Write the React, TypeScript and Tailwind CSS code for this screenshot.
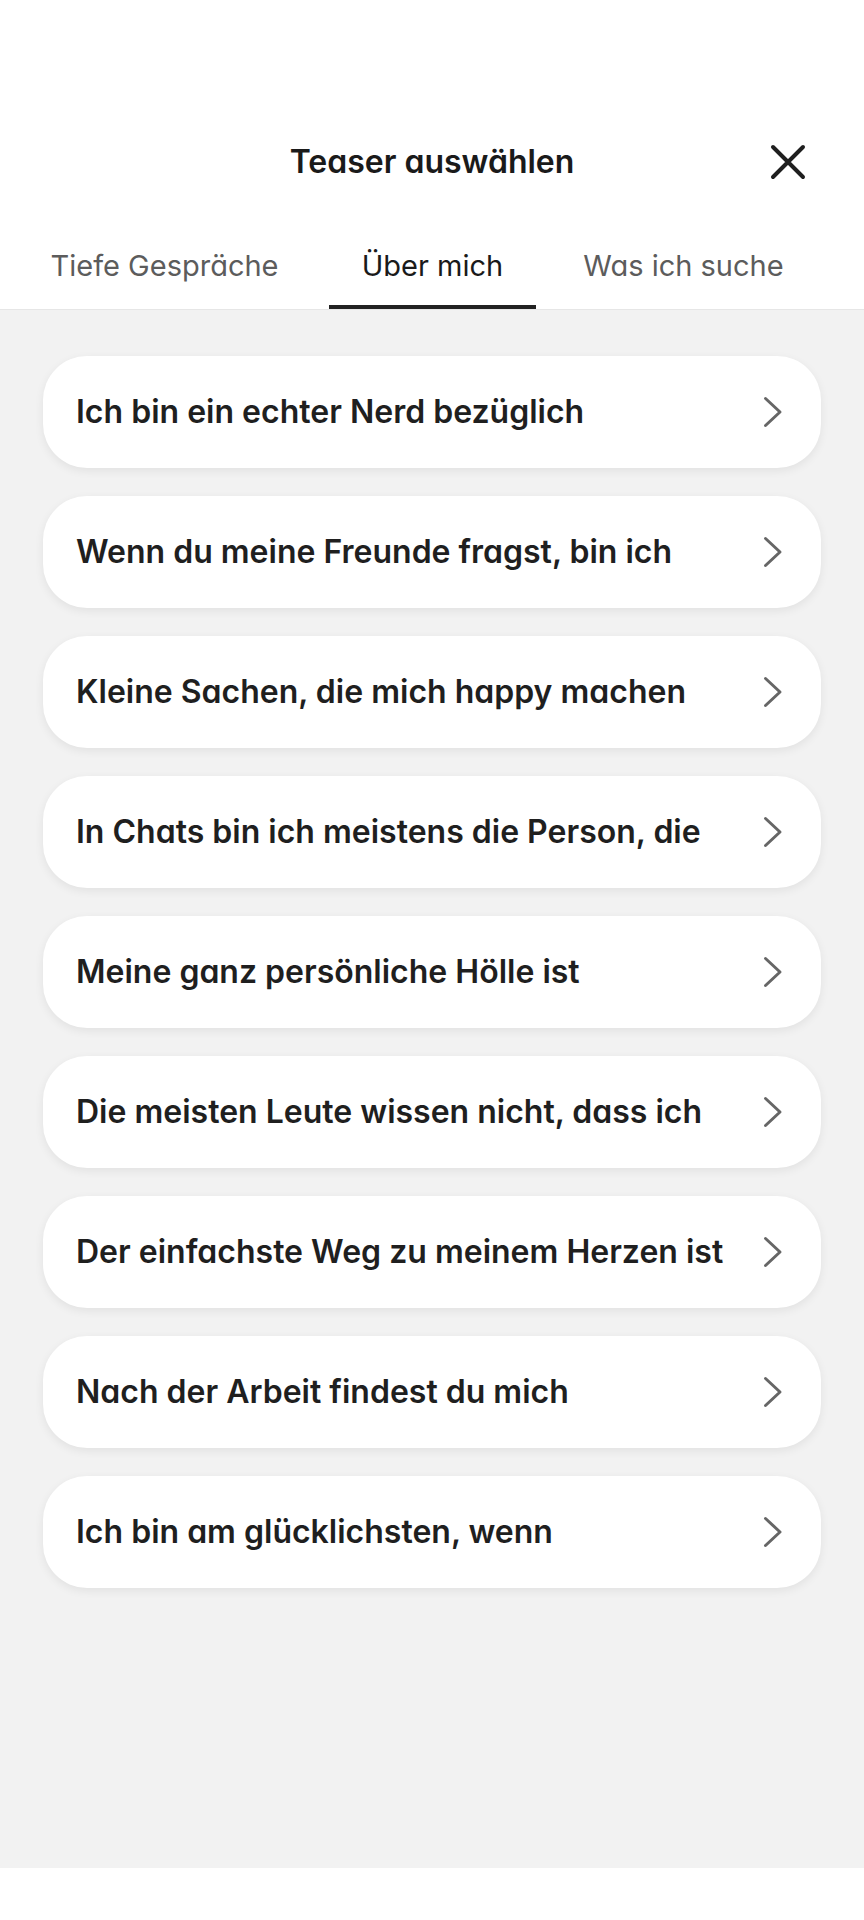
import React from 'react';

const teasers = [
  'Ich bin ein echter Nerd bezüglich',
  'Wenn du meine Freunde fragst, bin ich',
  'Kleine Sachen, die mich happy machen',
  'In Chats bin ich meistens die Person, die',
  'Meine ganz persönliche Hölle ist',
  'Die meisten Leute wissen nicht, dass ich',
  'Der einfachste Weg zu meinem Herzen ist',
  'Nach der Arbeit findest du mich',
  'Ich bin am glücklichsten, wenn',
];

const tabs = [
  { id: 'deep', label: 'Tiefe Gespräche', width: 'w-[329px]' },
  { id: 'me', label: 'Über mich', width: 'w-[207px]' },
  { id: 'search', label: 'Was ich suche', width: 'w-[295px]' },
];

const Chevron: React.FC = () => (
  <svg width="20" height="32" viewBox="0 0 20 32" fill="none" className="shrink-0">
    <path d="M2.5 2.5 L17 16 L2.5 29.5" stroke="#666666" strokeWidth="3" strokeLinecap="round" strokeLinejoin="round" />
  </svg>
);

const CloseIcon: React.FC = () => (
  <svg width="36" height="36" viewBox="0 0 36 36" fill="none">
    <path d="M3 3 L33 33 M33 3 L3 33" stroke="#1f1f1f" strokeWidth="4" strokeLinecap="round" />
  </svg>
);

const App: React.FC = () => {
  const active = 'me';

  return (
    <div className="flex flex-col min-h-[1920px] bg-white font-['Inter','Roboto',sans-serif] [font-feature-settings:'cv11']">
      <div className="bg-white border-b border-[#e6e6e6]">
        <div className="relative flex items-center justify-center h-[84px] mt-[120px]">
          <h1 className="text-[32px] font-semibold text-[#1a1a1a]">Teaser auswählen</h1>
          <button className="absolute right-[58px] top-1/2 -translate-y-1/2">
            <CloseIcon />
          </button>
        </div>
        <div className="flex mt-[2px]">
          {tabs.map((tab) => (
            <div key={tab.id} className={`${tab.width} flex flex-col items-center`}>
              <span
                className={`h-[99px] flex items-center pt-[20px] text-[29px] ${
                  tab.id === active ? 'text-[#1a1a1a]' : 'text-[#5c5c5c]'
                }`}
              >
                {tab.label}
              </span>
              <div className={`h-[4px] w-full ${tab.id === active ? 'bg-[#222222]' : 'bg-transparent'}`} />
            </div>
          ))}
        </div>
      </div>

      <div className="flex-1 bg-[#f2f2f2] px-[43px] pt-[46px] flex flex-col gap-[28px]">
        {teasers.map((text) => (
          <div
            key={text}
            className="h-[112px] bg-white rounded-[44px] flex items-center justify-between pl-[33px] pr-[38px] shadow-[0_3px_10px_rgba(0,0,0,0.07)]"
          >
            <span className="text-[32px] font-semibold text-[#1f1f1f]">{text}</span>
            <Chevron />
          </div>
        ))}
      </div>

      <div className="h-[52px] bg-white" />
    </div>
  );
};

export default App;
